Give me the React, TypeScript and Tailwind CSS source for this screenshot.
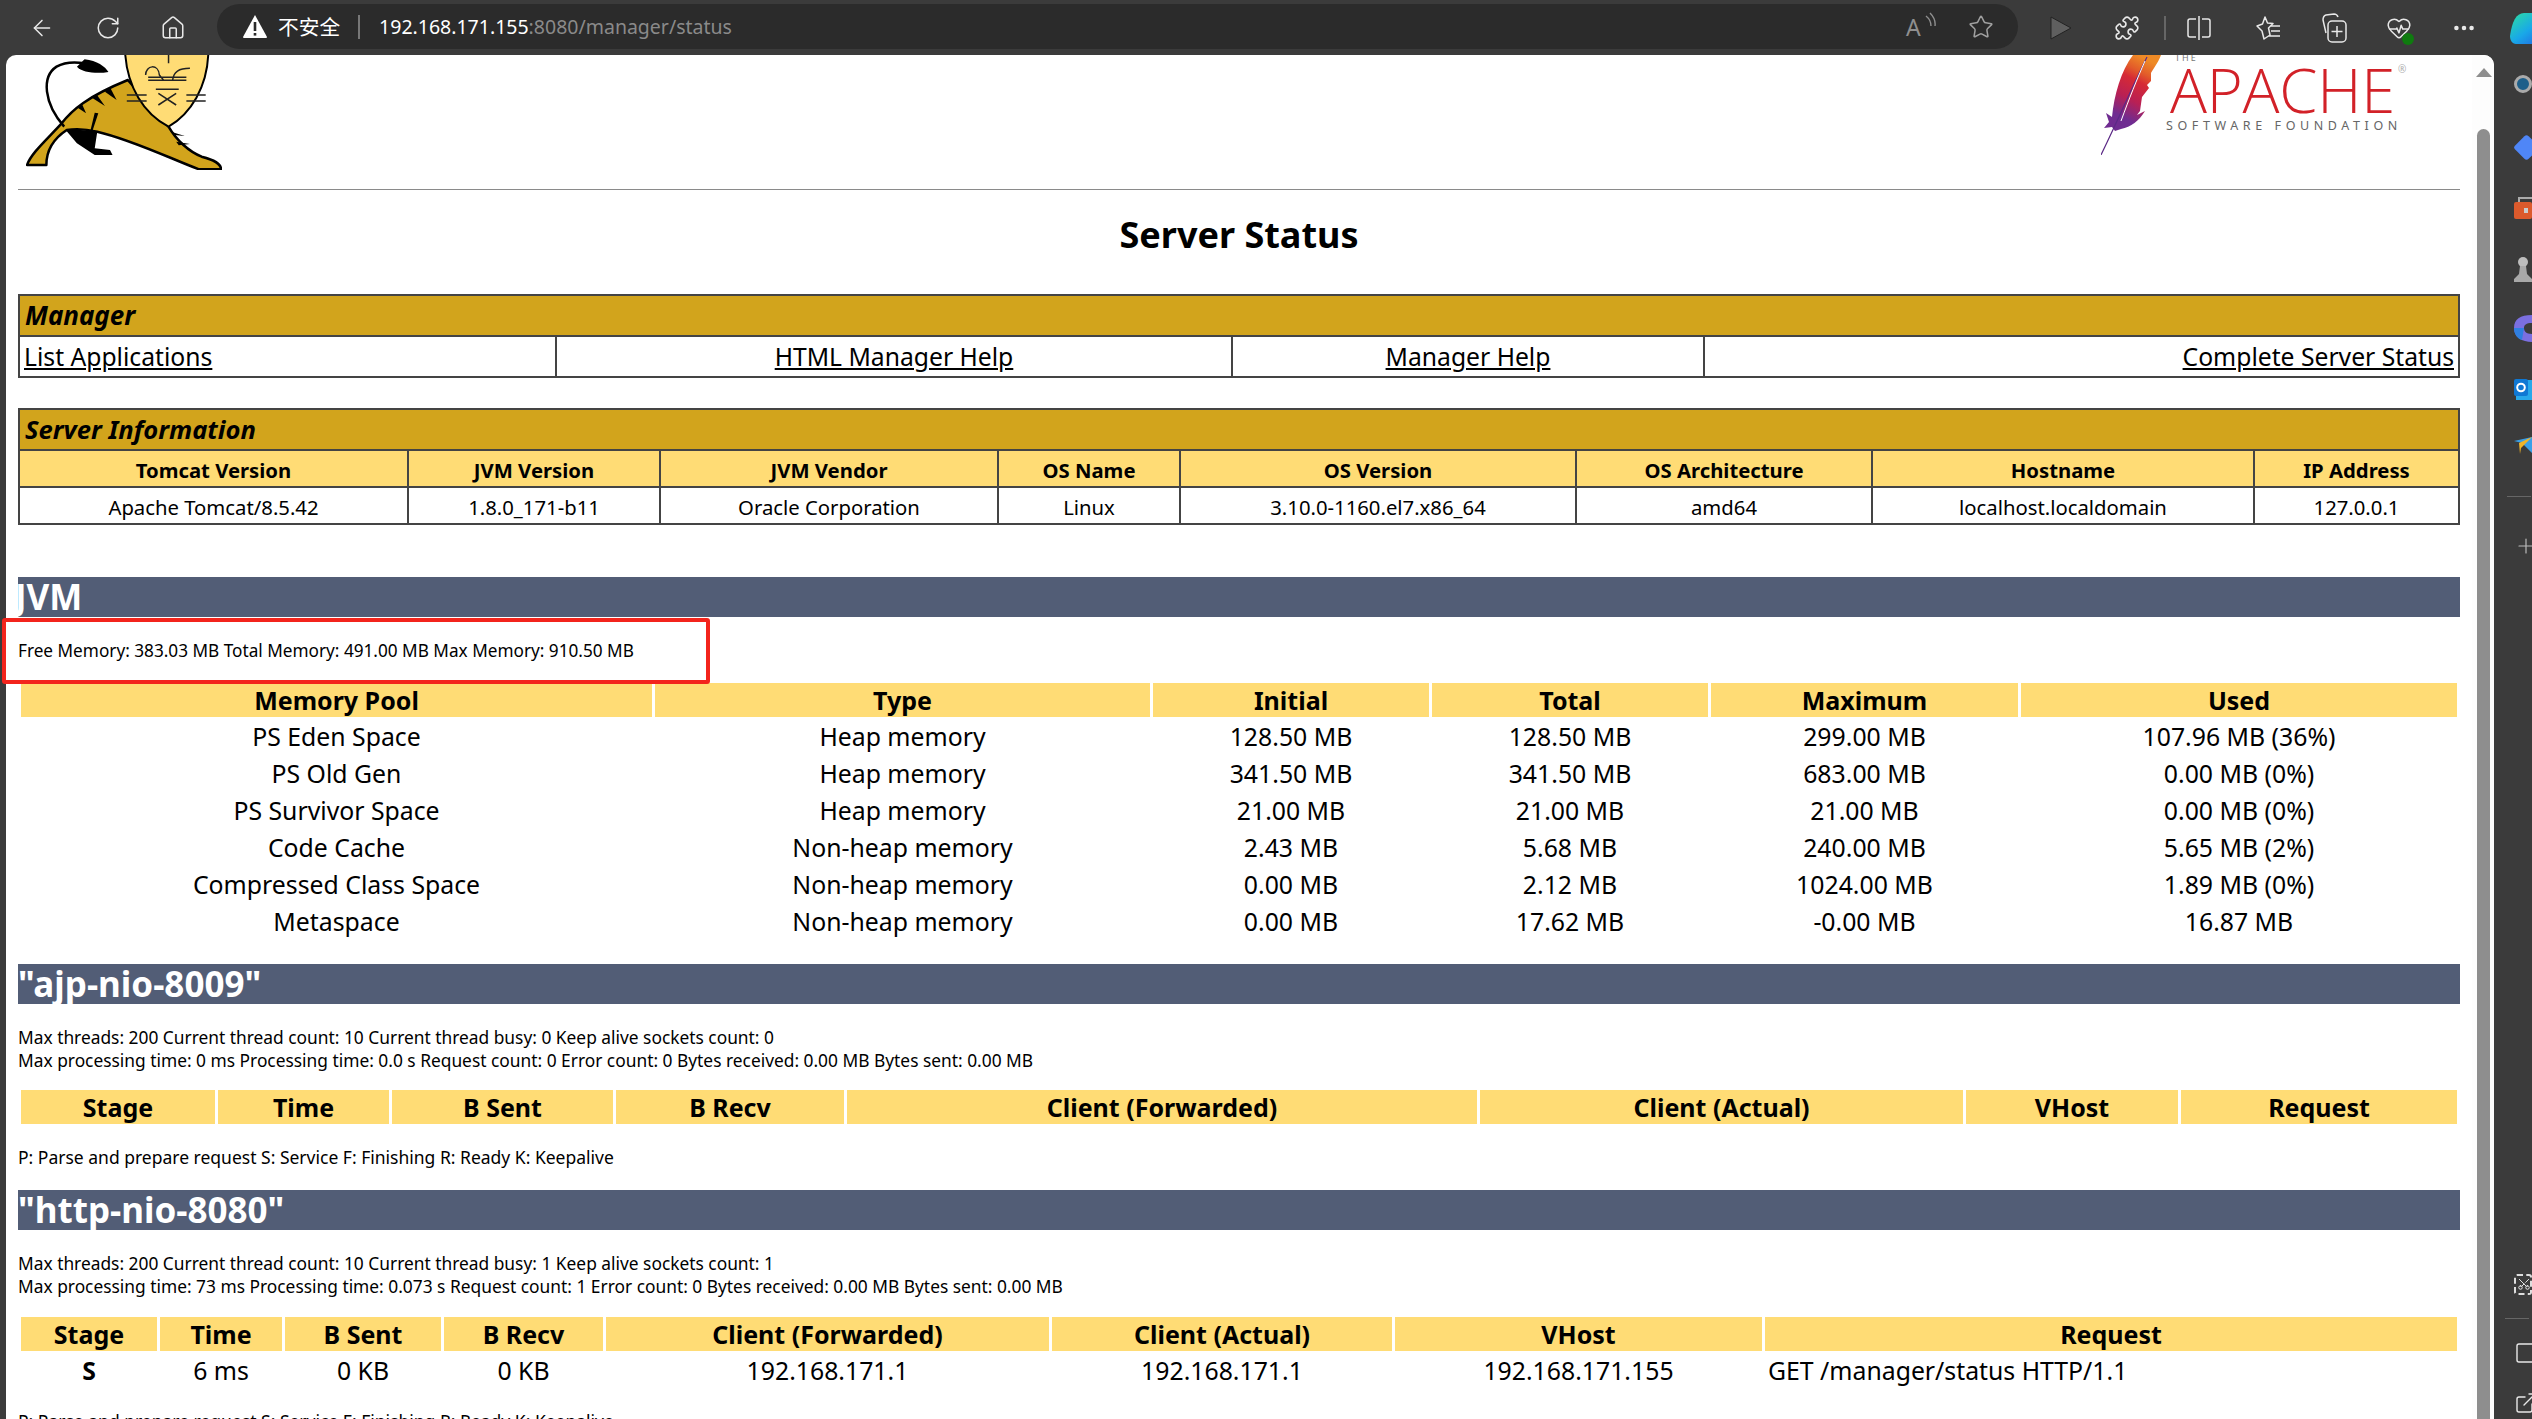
import React from "react";
import { ArrowLeft, RotateCw, Home, Star, Puzzle, MoreHorizontal, Plus, HeartPulse, Scissors, Square, ExternalLink } from "lucide-react";

const font = "[font-family:'Noto_Sans','Open_Sans',sans-serif]";

function Cat() {
  const s = { vectorEffect: "non-scaling-stroke" as const };
  return (
    <svg width="196" height="115" viewBox="50 165 385 345" preserveAspectRatio="none" className="block">
      <path d="M125 385 L190 395 L185 445 L215 450 L220 465 L185 465 L150 430 Z" fill="#000" />
      <path d="M52 495 C60 460 90 420 120 370 C140 330 170 290 250 240 L330 380 C345 420 370 455 395 470 C420 480 433 490 433 508 L390 508 C340 480 260 420 190 395 C170 388 150 385 130 390 C105 415 90 450 90 495 Z" fill="#d2a41c" stroke="#000" strokeWidth="2.5" strokeLinejoin="round" style={s} />
      <path d="M125 380 C85 310 80 230 110 200 C125 187 145 185 165 190" fill="none" stroke="#000" strokeWidth="2.5" style={s} />
      <path d="M165 178 C190 182 205 200 212 216 C190 222 160 218 150 200 Z" fill="#000" />
      <path d="M215 262 L228 300 L205 275 Z M188 282 L205 318 L178 292 Z M160 312 L168 340 L150 322 Z M185 338 L192 340 L180 395 L176 395 Z M335 395 L362 408 L342 405 Z M345 425 L372 432 L350 436 Z" fill="#000" />
      <path d="M245 165 C250 260 280 340 330 380 C375 340 405 260 408 165 Z" fill="#ffdc75" />
      <path d="M245 165 C250 260 280 340 330 380 C375 340 405 260 408 165" fill="none" stroke="#000" strokeWidth="2" style={s} />
      <path d="M330 165 L330 190 M285 225 C285 195 310 190 312 225 L320 240 M372 205 C350 205 340 215 338 240 M290 232 H365 M290 241 H365 M248 285 H287 M248 303 H287 M365 285 H403 M365 303 H403 M305 268 H350 M310 280 L345 315 M345 280 L310 315" fill="none" stroke="#222" strokeWidth="1.5" style={s} />
    </svg>
  );
}

function Feather() {
  return (
    <svg width="60" height="100" viewBox="0 0 60 100" className="block shrink-0">
      <defs>
        <linearGradient id="fe" x1="0.6" y1="0" x2="0.2" y2="1">
          <stop offset="0" stopColor="#ee8a26" />
          <stop offset="0.18" stopColor="#e25a2a" />
          <stop offset="0.3" stopColor="#d62a35" />
          <stop offset="0.55" stopColor="#b92054" />
          <stop offset="0.8" stopColor="#6f2c91" />
        </linearGradient>
      </defs>
      <path d="M32 0 L60 0 C57 8 52 14 50 18 L50 26 L46 30 L48 33 L41 42 L39 56 L36 60 L44 56 C38 66 30 72 20 74 L14 76 L11 72 L3 73 L8 67 L5 58 L11 62 C13 40 20 16 32 0 Z" fill="url(#fe)" />
      <path d="M46 2 C34 26 22 54 0 100" fill="none" stroke="#5b2a86" strokeWidth="1.2" />
      <path d="M44 6 C36 24 28 44 20 66" fill="none" stroke="#fff" strokeWidth="1" />
    </svg>
  );
}

function Bar({ children }: { children: React.ReactNode }) {
  return <h1 className="h-10 bg-[#525d76] text-white font-bold text-[35px] leading-[40px] whitespace-nowrap">{children}</h1>;
}

function Thread({ l1, l2 }: { l1: string; l2: string }) {
  return (
    <div className="mt-[22px] text-[17.35px] leading-[23px] text-black whitespace-nowrap">
      <div>{l1}</div>
      <div>{l2}</div>
    </div>
  );
}

function DataTable({ heads, widths, rows }: { heads: string[]; widths: string[]; rows: string[][] }) {
  return (
    <table className="table-fixed w-full border-separate border-spacing-x-[3px] border-spacing-y-0 text-[24.8px] text-black">
      <thead>
        <tr>
          {heads.map((h, i) => (
            <th key={h} className={`${widths[i]} h-[34px] p-0 bg-[#ffdc75] font-bold text-center text-[25px] leading-[33px]`}>{h}</th>
          ))}
        </tr>
      </thead>
      <tbody>
        {rows.map((r, j) => (
          <tr key={j}>
            {r.map((c, i) => (
              <td key={i} className={`h-[37px] p-0 pt-[2px] leading-[35px] whitespace-nowrap ${c.startsWith("GET") ? "text-left pl-[3px]" : "text-center"} ${c === "S" ? "font-bold" : ""}`}>{c}</td>
            ))}
          </tr>
        ))}
      </tbody>
    </table>
  );
}

const LEGEND = "P: Parse and prepare request S: Service F: Finishing R: Ready K: Keepalive";

export default function App() {
  const tb = "text-[#e8e8e8] shrink-0";
  return (
    <div className={`${font} relative h-[1419px] w-[2532px] overflow-hidden bg-[#3b3b3b] flex flex-col`}>
      <header className="h-[55px] flex items-center shrink-0">
        <ArrowLeft size={26} strokeWidth={1.4} className={`ml-[29px] ${tb}`} />
        <RotateCw size={26} strokeWidth={1.4} className={`ml-[40px] ${tb}`} />
        <Home size={26} strokeWidth={1.4} className={`ml-[39px] ${tb}`} />
        <div className="ml-[31px] w-[1801px] h-[45px] mt-[-2px] rounded-[23px] bg-[#2b2b2b] flex items-center pl-[26px] shrink-0">
          <svg width="24" height="23" viewBox="0 0 24 23"><path d="M12 0 L24 22 Q24 23 23 23 H1 Q0 23 0 22 Z" fill="#fff" /><rect x="10.7" y="7" width="2.6" height="9" fill="#2b2b2b" /><rect x="10.7" y="18" width="2.6" height="2.6" fill="#2b2b2b" /></svg>
          <span className="ml-[11px] text-[20.7px] text-white [font-family:'Noto_Sans_CJK_SC',sans-serif]">不安全</span>
          <span className="ml-[18px] h-6 w-[2px] bg-[#777]" />
          <span className="ml-[19px] text-[19.5px] text-white">192.168.171.155<span className="text-[#8a8a8a]">:8080/manager/status</span></span>
          <span className="ml-auto flex items-center">
            <span className="relative w-[32px] h-[30px] text-[23px] leading-[30px] text-[#8f8f8f] pl-[2px]">
              A
              <svg width="12" height="16" viewBox="0 0 12 16" fill="none" stroke="currentColor" strokeWidth="1.4" className="absolute right-0 top-0">
                <path d="M2 4 Q7 8 7 14 M6 1 Q12 7 11 14" />
              </svg>
            </span>
            <Star size={26} strokeWidth={1.4} className="ml-[32px] mr-[24px] text-[#a0a0a0]" />
          </span>
        </div>
        <svg width="22" height="24" viewBox="0 0 22 24" className="ml-[32px] shrink-0"><path d="M1 1 L21 12 L1 23 Z" fill="#5f5f5f" stroke="#222" /></svg>
        <Puzzle size={26} strokeWidth={1.5} className={`ml-[42px] ${tb}`} />
        <span className="ml-[24px] h-6 w-[2px] bg-[#666] shrink-0" />
        <svg width="26" height="26" viewBox="0 0 26 26" fill="none" stroke="#e8e8e8" strokeWidth="1.5" className="ml-[20px] shrink-0">
          <path d="M10 4 H4 Q2 4 2 6 V20 Q2 22 4 22 H10 M16 4 H22 Q24 4 24 6 V20 Q24 22 22 22 H16 M13 1 V25" />
        </svg>
        <svg width="26" height="26" viewBox="0 0 26 26" fill="none" stroke="#e8e8e8" strokeWidth="1.5" className="ml-[43px] shrink-0">
          <path d="M10 2 L12.5 8 L18 8.5 L13.5 13 L15 20 L9 24 L7 16 L2 11 L7.5 9 Z M16 11 H25 M16 16 H25 M14 21 H25" strokeLinejoin="round" />
        </svg>
        <svg width="26" height="30" viewBox="0 0 26 30" fill="none" stroke="#e8e8e8" strokeWidth="1.5" className="ml-[40px] shrink-0">
          <path d="M5 20 L2 7 Q2 3 5 2 L13 1 Q16 1 17 4" />
          <rect x="7" y="8" width="18" height="21" rx="4" />
          <path d="M16 13 V24 M10.5 18.5 H21.5" />
        </svg>
        <span className="relative ml-[39px] shrink-0">
          <HeartPulse size={26} strokeWidth={1.4} className={tb} />
          <span className="absolute right-[-2px] bottom-[-4px] w-[12px] h-[12px] rounded-full bg-[#0f7b0f]" />
        </span>
        <MoreHorizontal size={26} strokeWidth={2.2} className={`ml-[39px] ${tb}`} />
        <svg width="40" height="32" viewBox="0 0 40 32" className="ml-[33px] shrink-0">
          <defs><linearGradient id="cp" x1="0" y1="0" x2="1" y2="1"><stop offset="0" stopColor="#2ce0a0" /><stop offset="0.5" stopColor="#19a8e8" /><stop offset="1" stopColor="#2456e0" /></linearGradient></defs>
          <path d="M0 24 C2 10 6 1 14 1 L40 1 L40 32 L6 32 C2 32 0 28 0 24 Z" fill="url(#cp)" />
        </svg>
      </header>

      <div className="flex-1 flex min-h-0">
        <main className="ml-[6px] w-[2488px] bg-white rounded-t-[10px] flex overflow-hidden shrink-0">
          <div className="w-[2466px] pl-[12px] shrink-0 text-black">
            <div className="h-[234px] w-[2442px] relative">
              <div className="absolute left-[8px] top-0"><Cat /></div>
              <div className="absolute left-[2083px] top-0 flex">
                <Feather />
                <div className="ml-[6px] text-[#d22128] h-[80px]">
                  <div className="text-[9px] leading-[6px] h-[6px] overflow-hidden text-[#777] tracking-[2px] ml-[8px]">THE</div>
                  <div className="text-[61.5px] leading-[54px] h-[55px] font-light [font-family:'Open_Sans',sans-serif] tracking-[-0.2px] mt-[1px] ml-[3px] whitespace-nowrap">APACHE<sup className="text-[10px] text-[#aaa] top-[-40px] ml-[3px] font-normal">®</sup></div>
                  <div className="text-[12.5px] leading-[14px] tracking-[4.6px] text-[#666] whitespace-nowrap ml-[-1px] mt-[2px]">SOFTWARE FOUNDATION</div>
                </div>
              </div>
              <hr className="absolute left-0 right-0 top-[134px] border-0 h-[1px] bg-[#8a8a8a]" />
              <div className="absolute left-0 right-0 top-[155px] text-center text-[36px] leading-[50px] font-bold">Server Status</div>
            </div>

            <div className="w-[2442px] mt-[5px] border-2 border-[#444] text-[24.7px]">
              <div className="h-[41px] bg-[#d2a41c] border-b-2 border-[#444] italic font-bold pl-[5px] text-[26px] leading-[39px]">Manager</div>
              <div className="grid grid-cols-[535px_676px_472px_1fr] h-[39px] leading-[40px]">
                <div className="pl-[4px]"><a className="underline">List Applications</a></div>
                <div className="border-l-2 border-[#444] text-center"><a className="underline">HTML Manager Help</a></div>
                <div className="border-l-2 border-[#444] text-center"><a className="underline">Manager Help</a></div>
                <div className="border-l-2 border-[#444] text-right pr-[4px]"><a className="underline">Complete Server Status</a></div>
              </div>
            </div>

            <div className="w-[2442px] mt-[30px] border-2 border-[#444]">
              <div className="h-[41px] bg-[#d2a41c] border-b-2 border-[#444] italic font-bold pl-[5px] text-[25.6px] leading-[40px]">Server Information</div>
              <div className="grid grid-cols-[387px_252px_338px_182px_396px_296px_382px_1fr] text-[20.3px]">
                {["Tomcat Version", "JVM Version", "JVM Vendor", "OS Name", "OS Version", "OS Architecture", "Hostname", "IP Address"].map((h, i) => (
                  <div key={h} className={`h-[37px] bg-[#ffdc75] font-bold text-center leading-[38px] border-b-2 border-[#444] ${i ? "border-l-2" : ""}`}>{h}</div>
                ))}
                {["Apache Tomcat/8.5.42", "1.8.0_171-b11", "Oracle Corporation", "Linux", "3.10.0-1160.el7.x86_64", "amd64", "localhost.localdomain", "127.0.0.1"].map((c, i) => (
                  <div key={c} className={`h-[35px] text-center leading-[38px] border-[#444] ${i ? "border-l-2" : ""}`}>{c}</div>
                ))}
              </div>
            </div>

            <div className="w-[2442px] mt-[52px]">
              <Bar><span className="ml-[-3px]">JVM</span></Bar>
              <div className="h-[66px] text-[17.2px] leading-[68px] whitespace-nowrap">Free Memory: 383.03 MB Total Memory: 491.00 MB Max Memory: 910.50 MB</div>
              <DataTable
                heads={["Memory Pool", "Type", "Initial", "Total", "Maximum", "Used"]}
                widths={["w-[631px]", "w-[495px]", "w-[276px]", "w-[276px]", "w-[307px]", ""]}
                rows={[
                  ["PS Eden Space", "Heap memory", "128.50 MB", "128.50 MB", "299.00 MB", "107.96 MB (36%)"],
                  ["PS Old Gen", "Heap memory", "341.50 MB", "341.50 MB", "683.00 MB", "0.00 MB (0%)"],
                  ["PS Survivor Space", "Heap memory", "21.00 MB", "21.00 MB", "21.00 MB", "0.00 MB (0%)"],
                  ["Code Cache", "Non-heap memory", "2.43 MB", "5.68 MB", "240.00 MB", "5.65 MB (2%)"],
                  ["Compressed Class Space", "Non-heap memory", "0.00 MB", "2.12 MB", "1024.00 MB", "1.89 MB (0%)"],
                  ["Metaspace", "Non-heap memory", "0.00 MB", "17.62 MB", "-0.00 MB", "16.87 MB"],
                ]}
              />

              <div className="mt-[25px]"><Bar>"ajp-nio-8009"</Bar></div>
              <Thread l1="Max threads: 200 Current thread count: 10 Current thread busy: 0 Keep alive sockets count: 0" l2="Max processing time: 0 ms Processing time: 0.0 s Request count: 0 Error count: 0 Bytes received: 0.00 MB Bytes sent: 0.00 MB" />
              <div className="mt-[18px]">
                <DataTable
                  heads={["Stage", "Time", "B Sent", "B Recv", "Client (Forwarded)", "Client (Actual)", "VHost", "Request"]}
                  widths={["w-[194px]", "w-[171px]", "w-[221px]", "w-[228px]", "w-[630px]", "w-[483px]", "w-[212px]", ""]}
                  rows={[]}
                />
              </div>
              <div className="mt-[20px] h-[26px] text-[17.5px] leading-[26px] whitespace-nowrap">{LEGEND}</div>

              <div className="mt-[20px]"><Bar>"http-nio-8080"</Bar></div>
              <Thread l1="Max threads: 200 Current thread count: 10 Current thread busy: 1 Keep alive sockets count: 1" l2="Max processing time: 73 ms Processing time: 0.073 s Request count: 1 Error count: 0 Bytes received: 0.00 MB Bytes sent: 0.00 MB" />
              <div className="mt-[19px]">
                <DataTable
                  heads={["Stage", "Time", "B Sent", "B Recv", "Client (Forwarded)", "Client (Actual)", "VHost", "Request"]}
                  widths={["w-[136px]", "w-[122px]", "w-[156px]", "w-[159px]", "w-[443px]", "w-[340px]", "w-[367px]", ""]}
                  rows={[["S", "6 ms", "0 KB", "0 KB", "192.168.171.1", "192.168.171.1", "192.168.171.155", "GET /manager/status HTTP/1.1"]]}
                />
              </div>
              <div className="mt-[20px] h-[26px] text-[17.5px] leading-[26px] whitespace-nowrap">{LEGEND}</div>
            </div>
          </div>

          <div className="w-[22px] relative shrink-0 bg-[#fdfdfd]">
            <div className="absolute left-[4px] top-[13px] w-0 h-0 border-x-[8px] border-x-transparent border-b-[9px] border-b-[#8e8e8e]" />
            <div className="absolute left-[5px] top-[74px] bottom-0 w-[13px] rounded-t-[7px] bg-[#8e8e8e]" />
          </div>
        </main>

        <aside className="flex-1 min-w-0 overflow-hidden flex flex-col items-start pl-[20px] pt-[20px]">
          <span className="w-[18px] h-[18px] rounded-full border-[3px] border-[#aaa] bg-[#1d5f8a] shrink-0" />
          <span className="mt-[45px] w-[19px] h-[19px] bg-[#4f86f7] rotate-45 rounded-[3px] ml-[3px] shrink-0" />
          <svg width="18" height="22" viewBox="0 0 18 22" className="mt-[40px] shrink-0"><rect y="5" width="18" height="17" rx="2" fill="#dc5a2c" /><path d="M5 5 V1 H18" fill="none" stroke="#aaa" strokeWidth="2" /><rect x="10" y="11" width="4" height="5" fill="#ccc" /></svg>
          <svg width="18" height="25" viewBox="0 0 18 25" className="mt-[38px] shrink-0"><circle cx="9" cy="5" r="5" fill="#bdbdbd" /><path d="M6 9 H12 L13 17 L18 22 V25 H0 V22 L5 17 Z" fill="#a9a9a9" /></svg>
          <svg width="18" height="27" viewBox="0 0 18 27" className="mt-[33px] shrink-0"><path d="M18 0 C6 0 0 4 0 13 C0 22 8 27 18 27 V19 C12 19 10 16 10 13 C10 10 12 8 18 8 Z" fill="#7b6fe0" /><path d="M0 13 C0 20 4 24 8 25 L10 13 Z" fill="#2f7fe0" /></svg>
          <svg width="18" height="24" viewBox="0 0 18 24" className="mt-[34px] shrink-0"><rect y="4" x="2" width="16" height="20" fill="#28a8ea" /><rect y="3" width="14" height="17" rx="2" fill="#0f78d4" /><circle cx="7" cy="11.5" r="3.8" fill="none" stroke="#fff" strokeWidth="2" /></svg>
          <svg width="18" height="18" viewBox="0 0 18 18" className="mt-[37px] shrink-0"><path d="M0 4 L18 0 L18 16 L8 6 Z" fill="#3aa0e8" /><path d="M5 6 L18 0 L7 11 L6 17 Z" fill="#f0b428" /></svg>
          <span className="mt-[41px] ml-[-7px] w-6 h-[1px] bg-[#666] shrink-0" />
          <Plus size={24} strokeWidth={1.2} className="mt-[37px] text-[#bbb] shrink-0" />
          <span className="mt-[716px] relative w-[18px] h-[21px] border-2 border-dashed border-[#ddd] rounded-[3px] shrink-0">
            <Scissors size={14} strokeWidth={1.6} className="absolute left-[1px] top-[1px] text-[#eee] -rotate-90" />
          </span>
          <span className="mt-[23px] ml-[-9px] w-6 h-[1px] bg-[#666] shrink-0" />
          <Square size={24} strokeWidth={1.4} className="mt-[22px] text-[#e8e8e8] shrink-0" />
          <ExternalLink size={24} strokeWidth={1.4} className="mt-[26px] text-[#e8e8e8] shrink-0" />
        </aside>
      </div>

      <div className="absolute left-[2px] top-[618px] w-[708px] h-[66px] border-4 border-[#f3241c] rounded-[3px]" />
    </div>
  );
}
